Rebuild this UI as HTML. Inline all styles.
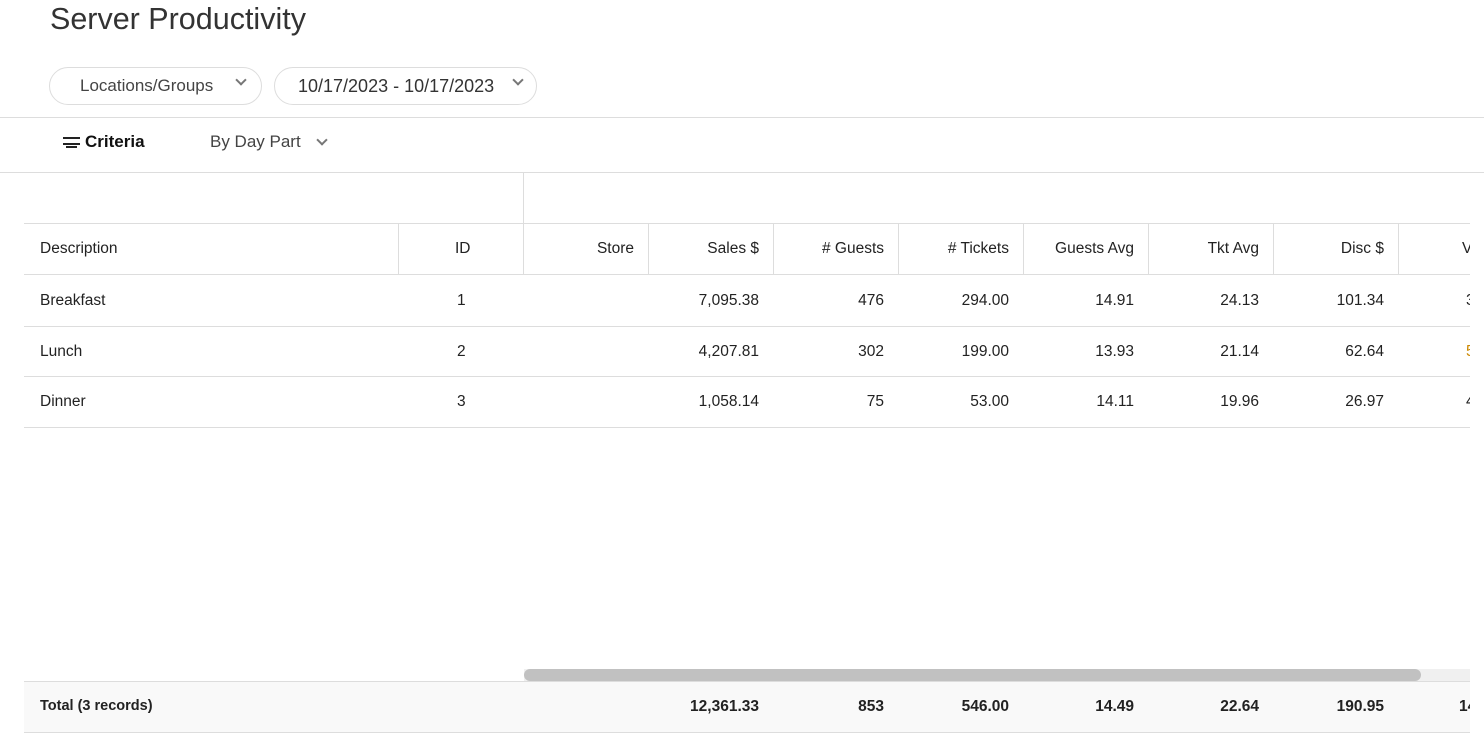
<!DOCTYPE html>
<html><head><style>
body{margin:0;width:1484px;height:735px;overflow:hidden;background:#fff;font-family:"Liberation Sans",sans-serif;color:#222;position:relative}
.a{position:absolute}
h1{position:absolute;left:50px;top:2px;margin:0;font-weight:normal;font-size:30.5px;color:#333}
.pill{position:absolute;top:67px;height:38px;border:1px solid #ddd;border-radius:20px;font-size:17px;color:#444;line-height:36px;box-sizing:border-box}
.chev{position:absolute;width:6px;height:6px;border-right:2.5px solid #777;border-bottom:2.5px solid #777;transform:rotate(45deg)}
.hl{position:absolute;height:1px;background:#ddd}
.vl{position:absolute;width:1px;background:#ddd}
.c{position:absolute;font-size:15.5px;text-align:right;width:111px}
</style></head><body>
<h1>Server Productivity</h1>
<div class="pill" style="left:49px;width:213px;padding-left:30px">Locations/Groups</div>
<div class="chev" style="left:237px;top:76px"></div>
<div class="pill" style="left:274px;width:263px;padding-left:23px;font-size:18px;color:#333">10/17/2023 - 10/17/2023</div>
<div class="chev" style="left:514px;top:76px"></div>
<div class="hl" style="left:0;top:117px;width:1484px"></div>
<div class="a" style="left:63px;top:137px;width:17px;border-top:2px solid #222;height:4px;border-bottom:2px solid #222"></div>
<div class="a" style="left:66px;top:146px;width:11px;border-top:2px solid #222"></div>
<div class="a" style="left:85px;top:132px;font-size:17px;font-weight:bold;color:#111">Criteria</div>
<div class="a" style="left:210px;top:132px;font-size:17px;color:#444">By Day Part</div>
<div class="chev" style="left:318px;top:136px"></div>
<div class="vl" style="left:523px;top:172px;height:51px"></div>
<div class="hl" style="left:24px;top:223px;width:1446px"></div>
<div class="hl" style="left:24px;top:274px;width:1446px"></div>
<div class="hl" style="left:24px;top:326px;width:1446px"></div>
<div class="hl" style="left:24px;top:376px;width:1446px"></div>
<div class="hl" style="left:24px;top:427px;width:1446px"></div>
<div class="vl" style="left:398px;top:223px;height:51px"></div>
<div class="vl" style="left:523px;top:223px;height:51px"></div>
<div class="vl" style="left:648px;top:223px;height:51px"></div>
<div class="vl" style="left:773px;top:223px;height:51px"></div>
<div class="vl" style="left:898px;top:223px;height:51px"></div>
<div class="vl" style="left:1023px;top:223px;height:51px"></div>
<div class="vl" style="left:1148px;top:223px;height:51px"></div>
<div class="vl" style="left:1273px;top:223px;height:51px"></div>
<div class="vl" style="left:1398px;top:223px;height:51px"></div>

<div class="a" style="left:40px;top:240px;font-size:15.5px">Description</div>
<div class="a" style="left:455px;top:240px;font-size:15.5px">ID</div>
<div class="c" style="left:523px;top:240px">Store</div>
<div class="c" style="left:648px;top:240px">Sales $</div>
<div class="c" style="left:773px;top:240px"># Guests</div>
<div class="c" style="left:898px;top:240px"># Tickets</div>
<div class="c" style="left:1023px;top:240px">Guests Avg</div>
<div class="c" style="left:1148px;top:240px">Tkt Avg</div>
<div class="c" style="left:1273px;top:240px">Disc $</div>
<div class="a" style="left:1462px;top:240px;font-size:15.5px">V</div>

<div class="a" style="left:40px;top:292px;font-size:15.5px">Breakfast</div>
<div class="a" style="left:457px;top:292px;font-size:15.5px">1</div>
<div class="c" style="left:648px;top:292px">7,095.38</div>
<div class="c" style="left:773px;top:292px">476</div>
<div class="c" style="left:898px;top:292px">294.00</div>
<div class="c" style="left:1023px;top:292px">14.91</div>
<div class="c" style="left:1148px;top:292px">24.13</div>
<div class="c" style="left:1273px;top:292px">101.34</div>
<div class="a" style="left:1466px;top:292px;font-size:15.5px">3</div>

<div class="a" style="left:40px;top:343px;font-size:15.5px">Lunch</div>
<div class="a" style="left:457px;top:343px;font-size:15.5px">2</div>
<div class="c" style="left:648px;top:343px">4,207.81</div>
<div class="c" style="left:773px;top:343px">302</div>
<div class="c" style="left:898px;top:343px">199.00</div>
<div class="c" style="left:1023px;top:343px">13.93</div>
<div class="c" style="left:1148px;top:343px">21.14</div>
<div class="c" style="left:1273px;top:343px">62.64</div>
<div class="a" style="left:1466px;top:343px;font-size:15.5px;color:#c80">5</div>

<div class="a" style="left:40px;top:393px;font-size:15.5px">Dinner</div>
<div class="a" style="left:457px;top:393px;font-size:15.5px">3</div>
<div class="c" style="left:648px;top:393px">1,058.14</div>
<div class="c" style="left:773px;top:393px">75</div>
<div class="c" style="left:898px;top:393px">53.00</div>
<div class="c" style="left:1023px;top:393px">14.11</div>
<div class="c" style="left:1148px;top:393px">19.96</div>
<div class="c" style="left:1273px;top:393px">26.97</div>
<div class="a" style="left:1466px;top:393px;font-size:15.5px">4</div>

<div class="a" style="left:524px;top:669px;width:946px;height:12px;background:#f0f0f0"></div>
<div class="a" style="left:524px;top:669px;width:897px;height:12px;background:#c1c1c1;border-radius:6px"></div>
<div class="a" style="left:24px;top:681px;width:1446px;height:50px;background:#f9f9f9;border-top:1px solid #ddd;border-bottom:1px solid #ddd"></div>
<div class="a" style="left:40px;top:698px;font-size:14.5px;font-weight:bold">Total (3 records)</div>
<div class="c" style="left:648px;top:698px;font-weight:bold">12,361.33</div>
<div class="c" style="left:773px;top:698px;font-weight:bold">853</div>
<div class="c" style="left:898px;top:698px;font-weight:bold">546.00</div>
<div class="c" style="left:1023px;top:698px;font-weight:bold">14.49</div>
<div class="c" style="left:1148px;top:698px;font-weight:bold">22.64</div>
<div class="c" style="left:1273px;top:698px;font-weight:bold">190.95</div>
<div class="a" style="left:1459px;top:698px;font-size:15.5px;font-weight:bold">14</div>
<div class="a" style="left:1470px;top:173px;width:14px;height:562px;background:#fff;z-index:5"></div>
<div class="hl" style="left:0;top:172px;width:1484px"></div>
</body></html>
